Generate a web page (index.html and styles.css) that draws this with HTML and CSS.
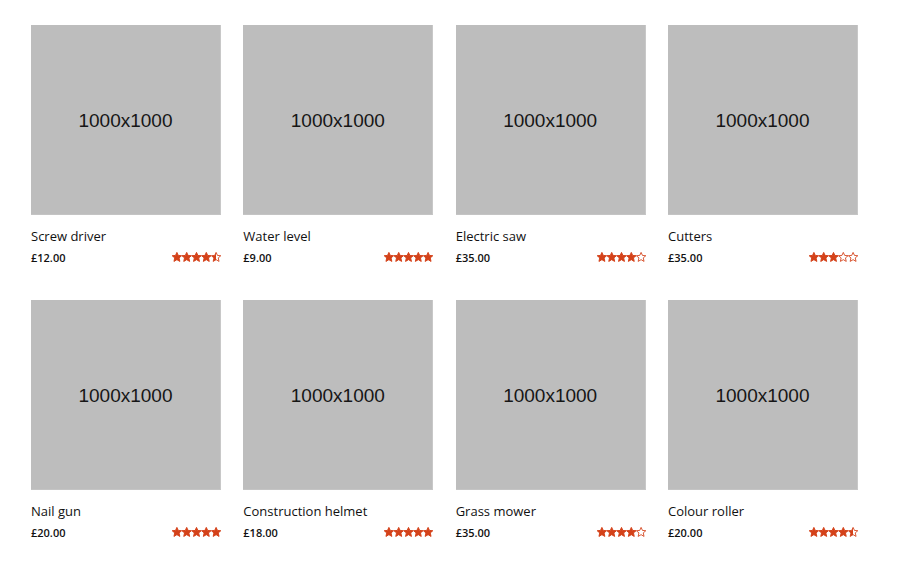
FILE: index.html
```html
<!DOCTYPE html>
<html>
<head>
<meta charset="utf-8">
<link rel="stylesheet" href="styles.css">
</head>
<body>
<svg width="0" height="0" class="defs">
  <defs>
    <polygon id="st" points="5,0.3 6.4,3.4 9.8,3.7 7.2,5.9 8,9.5 5,7.7 2,9.5 2.8,5.9 0.2,3.7 3.6,3.4"/>
    <linearGradient id="half"><stop offset="50%" stop-color="#d4421a"/><stop offset="50%" stop-color="#fff"/></linearGradient>
  </defs>
</svg>
<div class="grid">
  <div class="card">
    <div class="img">1000x1000</div>
    <div class="title">Screw driver</div>
    <div class="meta"><span class="price">£12.00</span>
      <svg class="stars" viewBox="0 0 50 10" width="49" height="10"><use href="#st" x="0" class="f"/><use href="#st" x="10" class="f"/><use href="#st" x="20" class="f"/><use href="#st" x="30" class="f"/><use href="#st" x="40" class="h"/></svg>
    </div>
  </div>
  <div class="card">
    <div class="img">1000x1000</div>
    <div class="title">Water level</div>
    <div class="meta"><span class="price">£9.00</span>
      <svg class="stars" viewBox="0 0 50 10" width="49" height="10"><use href="#st" x="0" class="f"/><use href="#st" x="10" class="f"/><use href="#st" x="20" class="f"/><use href="#st" x="30" class="f"/><use href="#st" x="40" class="f"/></svg>
    </div>
  </div>
  <div class="card">
    <div class="img">1000x1000</div>
    <div class="title">Electric saw</div>
    <div class="meta"><span class="price">£35.00</span>
      <svg class="stars" viewBox="0 0 50 10" width="49" height="10"><use href="#st" x="0" class="f"/><use href="#st" x="10" class="f"/><use href="#st" x="20" class="f"/><use href="#st" x="30" class="f"/><use href="#st" x="40" class="e"/></svg>
    </div>
  </div>
  <div class="card">
    <div class="img">1000x1000</div>
    <div class="title">Cutters</div>
    <div class="meta"><span class="price">£35.00</span>
      <svg class="stars" viewBox="0 0 50 10" width="49" height="10"><use href="#st" x="0" class="f"/><use href="#st" x="10" class="f"/><use href="#st" x="20" class="f"/><use href="#st" x="30" class="e"/><use href="#st" x="40" class="e"/></svg>
    </div>
  </div>
  <div class="card">
    <div class="img">1000x1000</div>
    <div class="title">Nail gun</div>
    <div class="meta"><span class="price">£20.00</span>
      <svg class="stars" viewBox="0 0 50 10" width="49" height="10"><use href="#st" x="0" class="f"/><use href="#st" x="10" class="f"/><use href="#st" x="20" class="f"/><use href="#st" x="30" class="f"/><use href="#st" x="40" class="f"/></svg>
    </div>
  </div>
  <div class="card">
    <div class="img">1000x1000</div>
    <div class="title">Construction helmet</div>
    <div class="meta"><span class="price">£18.00</span>
      <svg class="stars" viewBox="0 0 50 10" width="49" height="10"><use href="#st" x="0" class="f"/><use href="#st" x="10" class="f"/><use href="#st" x="20" class="f"/><use href="#st" x="30" class="f"/><use href="#st" x="40" class="f"/></svg>
    </div>
  </div>
  <div class="card">
    <div class="img">1000x1000</div>
    <div class="title">Grass mower</div>
    <div class="meta"><span class="price">£35.00</span>
      <svg class="stars" viewBox="0 0 50 10" width="49" height="10"><use href="#st" x="0" class="f"/><use href="#st" x="10" class="f"/><use href="#st" x="20" class="f"/><use href="#st" x="30" class="f"/><use href="#st" x="40" class="e"/></svg>
    </div>
  </div>
  <div class="card">
    <div class="img">1000x1000</div>
    <div class="title">Colour roller</div>
    <div class="meta"><span class="price">£20.00</span>
      <svg class="stars" viewBox="0 0 50 10" width="49" height="10"><use href="#st" x="0" class="f"/><use href="#st" x="10" class="f"/><use href="#st" x="20" class="f"/><use href="#st" x="30" class="f"/><use href="#st" x="40" class="h"/></svg>
    </div>
  </div>
</div>
</body>
</html>
```
FILE: styles.css
```css
html, body {
  margin: 0;
  padding: 0;
  background: #fff;
}
body {
  font-family: "Open Sans", "DejaVu Sans", sans-serif;
  color: #111;
}
.defs {
  position: absolute;
  width: 0;
  height: 0;
}
.grid {
  display: grid;
  grid-template-columns: repeat(4, 190px);
  column-gap: 22.33px;
  row-gap: 35px;
  padding: 25px 31px 0 31px;
}
.card {
  display: flex;
  flex-direction: column;
}
.img {
  width: 190px;
  height: 190px;
  background: #bdbdbd;
  display: flex;
  align-items: center;
  justify-content: center;
  font-family: "Liberation Sans", Arial, sans-serif;
  font-size: 19px;
  color: #161616;
  box-sizing: border-box;
  border-right: 1px solid #c8c8c8;
  border-bottom: 1px solid #c4c4c4;
  padding-top: 3px;
}
.title {
  margin-top: 13px;
  font-size: 13px;
  line-height: 17px;
  color: #111;
}
.meta {
  margin-top: 4px;
  display: flex;
  justify-content: space-between;
  align-items: center;
  height: 16px;
}
.price {
  font-size: 11px;
  font-weight: 600;
  color: #111;
}
.stars {
  display: block;
}
.stars .f {
  fill: #d4421a;
  stroke: #d4421a;
  stroke-width: 1;
  stroke-linejoin: round;
}
.stars .e {
  fill: #fff;
  stroke: #d4421a;
  stroke-width: 0.9;
  stroke-linejoin: round;
}
.stars .h {
  fill: url(#half);
  stroke: #d4421a;
  stroke-width: 0.9;
  stroke-linejoin: round;
}
```
